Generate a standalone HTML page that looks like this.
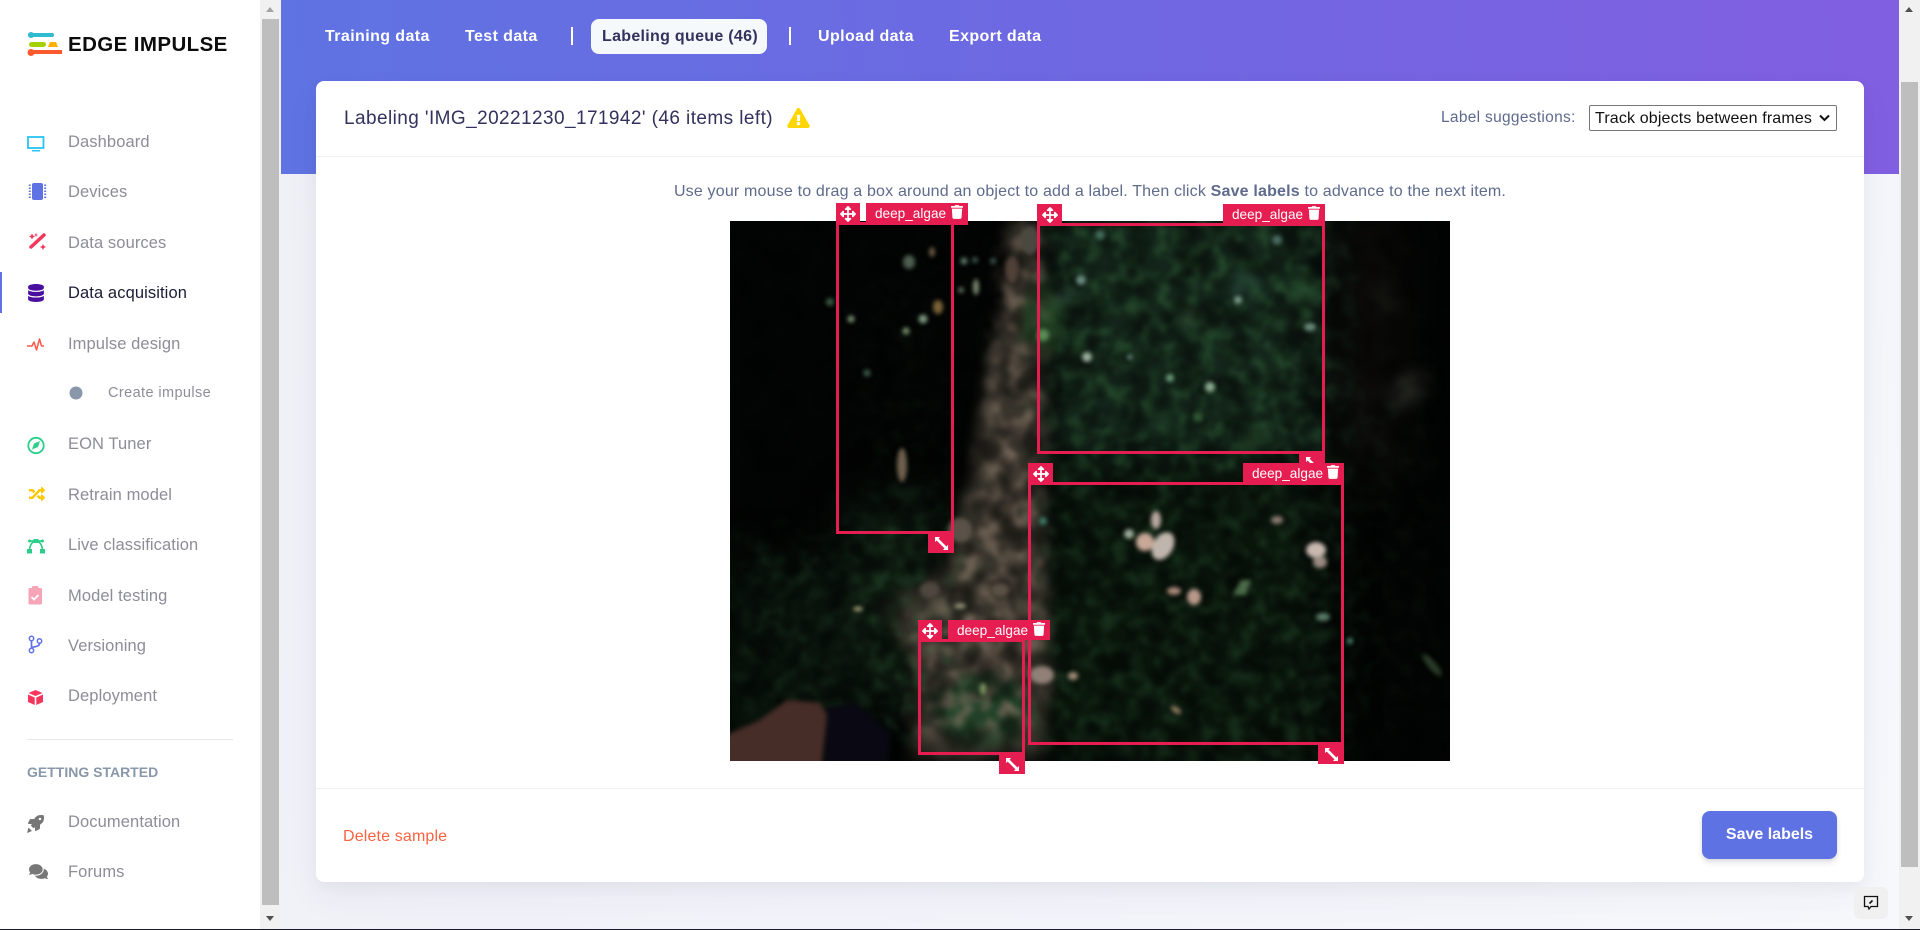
<!DOCTYPE html>
<html lang="en"><head><meta charset="utf-8"><title>Labeling queue - Edge Impulse</title>
<style>
html,body{margin:0;padding:0;width:1920px;height:930px;overflow:hidden;background:#fff}
body{position:relative;font-family:"Liberation Sans",sans-serif;color:#32325d}
.a{position:absolute}
.t{position:absolute;white-space:nowrap}
.nav{left:68px;font-size:16.5px;letter-spacing:.1px;line-height:24px;height:24px;color:#8d8d98;margin-top:1px}
.tab{font-weight:700;font-size:16px;letter-spacing:.4px;line-height:24px;top:25px;color:#fff}
.sep{position:absolute;width:2px;top:27px;height:18px;background:#fff}
.box{position:absolute;border:3px solid #e61d50;box-sizing:border-box}
.h{position:absolute;background:#e61d50}
.lab{position:absolute;background:#e61d50;color:#fff;font-size:13.6px;line-height:20px;white-space:nowrap}
.lab span{position:absolute;left:9px;top:1px}
.lab svg{position:absolute;top:2px;right:5px;width:12px;height:14px;fill:#fff}
.h svg{position:absolute;fill:#fff}
</style></head><body>

<!-- sidebar -->
<div class="a" style="left:0;top:0;width:260px;height:930px;background:#fff"></div>
<div class="a" style="left:260px;top:0;width:21px;height:930px;background:#f1f1f1"></div>
<div class="a" style="left:262px;top:19px;width:17px;height:886px;background:#bebebe"></div>
<div class="a" style="left:266px;top:7px;width:0;height:0;border-left:4.5px solid transparent;border-right:4.5px solid transparent;border-bottom:5px solid #a3a3a3"></div>
<div class="a" style="left:266px;top:916px;width:0;height:0;border-left:4.5px solid transparent;border-right:4.5px solid transparent;border-top:5px solid #505050"></div>
<div class="a" style="left:0;top:272px;width:2px;height:41px;background:#5e72e4"></div>

<!-- logo + sidebar icons -->
<svg class="a" style="left:0;top:0" width="260" height="930" viewBox="0 0 260 930">
 <rect x="28" y="33" width="26" height="4" rx="2" fill="#2fbcd0"/><circle cx="31" cy="35" r="3" fill="#2fbcd0"/>
 <rect x="29" y="42" width="17" height="5" rx="2.5" fill="#a5d106"/>
 <path d="M50 42h6l2 5H48z" fill="#ffb300"/>
 <rect x="29" y="50" width="33" height="4" fill="#ff5a2e"/><circle cx="31" cy="52.5" r="3.5" fill="#ff5a2e"/>

 <rect x="28" y="137" width="15.5" height="11" fill="#fff" stroke="#27c5f0" stroke-width="1.8"/><rect x="32" y="150" width="8" height="1.5" fill="#27c5f0"/>

 <rect x="32" y="183" width="11" height="17" rx="2" fill="#5e72e4"/><path d="M29.8 184.500v15M45.200 184.500v15" stroke="#5e72e4" stroke-width="2" stroke-dasharray="1.500 1.500"/>

 <path d="M31 247L44 235" stroke="#f5365c" stroke-width="3.500" stroke-linecap="round"/><path d="M32 233.500l1 2 2 1-2 1-1 2-1-2-2-1 2-1zM43 244l1 2 2 1-2 1-1 2-1-2-2-1 2-1zM36 233l.7 1.500 1.300.5-1.300.5-.7 1.500-.7-1.500-1.300-.5 1.300-.5z" fill="#f5365c"/>

 <svg x="28" y="284" width="16" height="18" viewBox="0 0 448 512"><path fill="#4b0f9f" d="M448 73.143v45.714C448 159.143 347.667 192 224 192S0 159.143 0 118.857V73.143C0 32.857 100.333 0 224 0s224 32.857 224 73.143zM448 176v102.857C448 319.143 347.667 352 224 352S0 319.143 0 278.857V176c48.125 33.143 136.208 48.572 224 48.572S399.874 209.143 448 176zm0 160v102.857C448 479.143 347.667 512 224 512S0 479.143 0 438.857V336c48.125 33.143 136.208 48.572 224 48.572S399.874 369.143 448 336z"/></svg>

 <path d="M27 346h5l2-4 2.500 8 3-11 2 7h2.500" fill="none" stroke="#fb5a4a" stroke-width="1.500" stroke-linejoin="round"/>
 <circle cx="76" cy="393" r="6.500" fill="#8898aa"/>

 <circle cx="36" cy="445.500" r="7.700" fill="none" stroke="#2dce89" stroke-width="1.800"/><path d="M40 441l-2 6-6 2.500 2-6z" fill="#2dce89"/>

 <svg x="28" y="486" width="18" height="16" viewBox="0 0 512 512"><path fill="#ffc800" d="M504.971 359.029c9.373 9.373 9.373 24.569 0 33.941l-80 79.984c-15.01 15.01-40.971 4.49-40.971-16.971V416h-58.785a12.004 12.004 0 0 1-8.773-3.812l-70.556-75.596 53.333-57.143L352 336h32v-39.981c0-21.438 25.943-31.998 40.971-16.971l80 79.981zM12 176h84l52.781 56.551 53.333-57.143-70.556-75.596A11.999 11.999 0 0 0 122.785 96H12c-6.627 0-12 5.373-12 12v56c0 6.627 5.373 12 12 12zm372 0v39.984c0 21.46 25.961 31.98 40.971 16.971l80-79.984c9.373-9.373 9.373-24.569 0-33.941l-80-79.981C409.943 24.021 384 34.582 384 56.019V96h-58.785a12.004 12.004 0 0 0-8.773 3.812L96 336H12c-6.627 0-12 5.373-12 12v56c0 6.627 5.373 12 12 12h110.785c3.326 0 6.503-1.381 8.773-3.812L352 176h32z"/></svg>

 <path d="M29.500 550C30 544 33 541 36 541s6 3 6.500 9M30 541h12" fill="none" stroke="#2dce89" stroke-width="1.700"/><rect x="27" y="549" width="5" height="4.500" fill="#2dce89"/><rect x="40" y="549" width="5" height="4.500" fill="#2dce89"/><rect x="33.500" y="539" width="5" height="4" fill="#2dce89"/><circle cx="29.500" cy="541" r="1.500" fill="#2dce89"/><circle cx="42.500" cy="541" r="1.500" fill="#2dce89"/>

 <rect x="28.500" y="588" width="13.500" height="16.500" rx="1.500" fill="#f6a5b8"/><rect x="32" y="586" width="6.500" height="4" rx="1" fill="#f6a5b8"/><path d="M31.500 597l2.500 2.500 4.500-4.500" fill="none" stroke="#fff" stroke-width="1.800"/>

 <circle cx="31.500" cy="638.500" r="2.200" fill="none" stroke="#5e72e4" stroke-width="1.500"/><circle cx="31.500" cy="650.500" r="2.200" fill="none" stroke="#5e72e4" stroke-width="1.500"/><circle cx="39.500" cy="641" r="2.200" fill="none" stroke="#5e72e4" stroke-width="1.500"/><path d="M31.500 641v7M39.500 643.500c0 3-4 3-8 4" fill="none" stroke="#5e72e4" stroke-width="1.700"/>

 <path d="M35.500 690l7 3-7 3-7-3z" fill="#f5365c"/><path d="M28 694.500l6.700 3V705l-6.700-3zM43 694.500l-6.700 3V705l6.700-3z" fill="#f5365c"/>

 <svg x="28" y="815" width="16" height="16" viewBox="0 0 512 512"><path fill="#777" d="M505.12 19.09c-1.19-5.53-6.66-11-12.21-12.19C460.72 0 435.51 0 410.41 0 307.18 0 245.27 55.2 199.05 128H94.84c-16.35.02-35.56 11.88-42.89 26.48L2.52 253.3A28.4 28.4 0 0 0 0 264a24 24 0 0 0 24 24h103.81l-22.47 22.47c-11.37 11.36-13 32.26 0 45.25l50.9 50.9c11.16 11.19 32.16 13.16 45.28 0L224 384.16V488a24 24 0 0 0 24 24 28.56 28.56 0 0 0 10.71-2.52l98.73-49.39c14.63-7.3 26.51-26.5 26.51-42.86V312.8c72.6-46.31 128.03-108.41 128.03-211.1.1-25.2.1-50.4-6.86-82.61zM384.04 168a40 40 0 1 1 40-40 40.02 40.02 0 0 1-40 40z"/></svg>
 <path d="M27 833l1.500-5.500 3.500 3.500z" fill="#777"/>

 <svg x="29" y="863" width="19" height="17" viewBox="0 0 576 512"><path fill="#777" d="M416 192c0-88.400-93.100-160-208-160S0 103.600 0 192c0 34.300 14.100 65.900 38 92-13.400 30.200-35.500 54.200-35.800 54.500-2.200 2.300-2.800 5.700-1.500 8.700S4.800 352 8 352c36.600 0 66.900-12.300 88.700-25 32.200 15.700 70.300 25 111.300 25 114.900 0 208-71.600 208-160zm122 220c23.900-26 38-57.700 38-92 0-66.900-53.500-124.200-129.300-148.100.9 6.600 1.300 13.300 1.300 20.100 0 105.900-107.700 192-240 192-10.800 0-21.300-.8-31.700-1.900C207.800 439.600 281.800 480 368 480c41 0 79.100-9.200 111.300-25 21.800 12.700 52.100 25 88.700 25 3.200 0 6.100-1.900 7.300-4.800 1.300-2.900.7-6.300-1.500-8.700-.3-.3-22.400-24.200-35.800-54.500z"/></svg>
</svg>

<span class="t" style="left:68px;top:33px;font-size:20.5px;font-weight:700;line-height:24px;letter-spacing:.4px;color:#0c0c0c">EDGE IMPULSE</span>
<span class="t nav" style="top:129px">Dashboard</span>
<span class="t nav" style="top:179px">Devices</span>
<span class="t nav" style="top:230px">Data sources</span>
<span class="t nav" style="top:280px;color:#1b1b36">Data acquisition</span>
<span class="t nav" style="top:331px">Impulse design</span>
<span class="t" style="left:108px;top:382px;font-size:14.5px;letter-spacing:.4px;line-height:22px;color:#8d8d98">Create impulse</span>
<span class="t nav" style="top:431px">EON Tuner</span>
<span class="t nav" style="top:482px">Retrain model</span>
<span class="t nav" style="top:532px">Live classification</span>
<span class="t nav" style="top:583px">Model testing</span>
<span class="t nav" style="top:633px">Versioning</span>
<span class="t nav" style="top:683px">Deployment</span>
<div class="a" style="left:27px;top:739px;width:206px;height:1px;background:#e6e7ea"></div>
<span class="t" style="left:27px;top:762px;font-size:14px;font-weight:700;line-height:20px;color:#8898aa">GETTING STARTED</span>
<span class="t nav" style="top:809px">Documentation</span>
<span class="t nav" style="top:859px">Forums</span>

<!-- main -->
<div class="a" style="left:281px;top:0;width:1618px;height:930px;background:linear-gradient(120deg,#eff0f6,#f2f3fa 50%,#f6f8fc)"></div>
<div class="a" style="left:281px;top:0;width:1618px;height:174px;background:linear-gradient(87deg,#5f73e2 0%,#6f68e2 50%,#815fe1 100%)"></div>

<span class="t tab" style="left:325px">Training data</span>
<span class="t tab" style="left:465px">Test data</span>
<div class="sep" style="left:571px"></div>
<div class="a" style="left:591px;top:19px;width:176px;height:35px;border-radius:8px;background:#f6f9fc"></div>
<span class="t tab" style="left:602px;color:#32325d;letter-spacing:.3px">Labeling queue (46)</span>
<div class="sep" style="left:789px"></div>
<span class="t tab" style="left:818px">Upload data</span>
<span class="t tab" style="left:949px">Export data</span>

<!-- card -->
<div class="a" style="left:316px;top:81px;width:1548px;height:801px;background:#fff;border-radius:8px;box-shadow:0 15px 35px rgba(50,50,93,.05),0 5px 15px rgba(0,0,0,.04)"></div>
<div class="a" style="left:316px;top:156px;width:1548px;height:1px;background:#eff0f3"></div>
<div class="a" style="left:316px;top:788px;width:1548px;height:1px;background:#eff0f3"></div>

<span class="t" style="left:344px;top:106px;font-size:19px;letter-spacing:.42px;line-height:26px;color:#32325d">Labeling 'IMG_20221230_171942' (46 items left)</span>
<svg class="a" style="left:787px;top:108px" width="23" height="20" viewBox="0 0 576 512"><path fill="#ffd600" d="M569.517 440.013C587.975 472.007 564.806 512 527.94 512H48.054c-36.937 0-59.999-40.055-41.577-71.987L246.423 23.985c18.467-32.009 64.72-31.951 83.154 0l239.94 416.028zM288 354c-25.405 0-46 20.595-46 46s20.595 46 46 46 46-20.595 46-46-20.595-46-46-46zm-43.673-165.346l7.418 136c.347 6.364 5.609 11.346 11.982 11.346h48.546c6.373 0 11.635-4.982 11.982-11.346l7.418-136c.375-6.874-5.098-12.654-11.982-12.654h-63.383c-6.884 0-12.356 5.78-11.981 12.654z"/></svg>

<span class="t" style="left:1441px;top:106px;font-size:15.5px;letter-spacing:.3px;line-height:24px;color:#5f6b8c">Label suggestions:</span>
<div class="a" style="left:1589px;top:105px;width:248px;height:26px;box-sizing:border-box;border:1px solid #767676;border-radius:2px;background:#fff"></div>
<span class="t" style="left:1595px;top:107px;font-size:16px;letter-spacing:.15px;line-height:24px;color:#111">Track objects between frames</span>
<svg class="a" style="left:1819px;top:114px" width="11" height="8" viewBox="0 0 11 8"><path d="M1 1.500l4.500 4.500L10 1.500" fill="none" stroke="#111" stroke-width="2"/></svg>

<div class="a" style="left:316px;top:181px;width:1548px;text-align:center;font-size:16px;letter-spacing:.18px;line-height:22px;color:#5f6b8c;white-space:nowrap">Use your mouse to drag a box around an object to add a label. Then click <b>Save labels</b> to advance to the next item.</div>

<!-- photo -->
<svg class="a" style="left:730px;top:221px" width="720" height="540" viewBox="730 221 720 540">
 <defs>
  <clipPath id="cp"><rect x="730" y="221" width="720" height="540"/></clipPath>
  <filter id="bl" filterUnits="userSpaceOnUse" x="600" y="100" width="980" height="800" color-interpolation-filters="sRGB"><feGaussianBlur stdDeviation="22"/></filter>
  <filter id="bs" x="-80%" y="-80%" width="260%" height="260%" color-interpolation-filters="sRGB"><feGaussianBlur stdDeviation="2.2"/></filter>
  <filter id="bm" filterUnits="userSpaceOnUse" x="600" y="100" width="980" height="800" color-interpolation-filters="sRGB"><feGaussianBlur stdDeviation="7"/></filter>
  <filter id="bp" filterUnits="userSpaceOnUse" x="600" y="100" width="980" height="800" color-interpolation-filters="sRGB"><feGaussianBlur stdDeviation="2.5"/></filter>
  <filter id="fol" filterUnits="userSpaceOnUse" x="700" y="200" width="780" height="600" color-interpolation-filters="sRGB">
   <feGaussianBlur in="SourceGraphic" stdDeviation="22" result="b"/>
   <feTurbulence type="fractalNoise" baseFrequency=".07" numOctaves="2" seed="7" result="n"/>
   <feColorMatrix in="n" type="matrix" values="0 0 0 0 .15  0 0 0 0 .3  0 0 0 0 .18  3.5 0 0 0 -1.5" result="c"/>
   <feGaussianBlur in="c" stdDeviation="2" result="c2"/>
   <feComposite in="c2" in2="b" operator="in"/>
  </filter>
  <filter id="brn" filterUnits="userSpaceOnUse" x="700" y="200" width="780" height="600" color-interpolation-filters="sRGB">
   <feGaussianBlur in="SourceGraphic" stdDeviation="10" result="b"/>
   <feTurbulence type="fractalNoise" baseFrequency=".055" numOctaves="2" seed="21" result="n"/>
   <feColorMatrix in="n" type="matrix" values="0 0 0 0 .5  0 0 0 0 .44  0 0 0 0 .38  3.5 0 0 0 -1.4" result="c"/>
   <feGaussianBlur in="c" stdDeviation="2.5" result="c2"/>
   <feComposite in="c2" in2="b" operator="in"/>
  </filter>
  <filter id="drk" filterUnits="userSpaceOnUse" x="700" y="200" width="780" height="600" color-interpolation-filters="sRGB">
   <feTurbulence type="fractalNoise" baseFrequency=".04" numOctaves="2" seed="4" result="n"/>
   <feColorMatrix in="n" type="matrix" values="0 0 0 0 0  0 0 0 0 0  0 0 0 0 0  4 0 0 0 -1.6" result="c"/>
   <feGaussianBlur in="c" stdDeviation="3" result="c2"/>
   <feComposite in="c2" in2="SourceAlpha" operator="in"/>
  </filter>
 </defs>
 <g clip-path="url(#cp)">
  <rect x="730" y="221" width="720" height="540" fill="#030504"/>
  <!-- soft base -->
  <g filter="url(#bl)">
   <rect x="1050" y="200" width="270" height="260" fill="#14261b"/>
   <rect x="1040" y="470" width="290" height="310" fill="#0a160c"/>
   <rect x="850" y="500" width="100" height="200" fill="#0e1a10"/>
   <rect x="720" y="560" width="130" height="220" fill="#09120b"/>
   <rect x="1340" y="220" width="60" height="260" fill="#0e0d0b"/>
  </g>
  <g filter="url(#bm)">
   <path d="M1008 221h32l4 100 0 160 6 220-10 60h-130l10-90-18-30-22-30 68-50 22-80 18-110 20-80z" fill="#38342c"/>
   <ellipse cx="1040" cy="320" rx="18" ry="36" fill="#2a4f2a"/>
   <ellipse cx="985" cy="710" rx="50" ry="36" fill="#224228"/>
   <circle cx="1245" cy="285" r="13" fill="#2c4c40"/><circle cx="1305" cy="290" r="14" fill="#2c5534"/>
   <circle cx="1253" cy="440" r="12" fill="#234428"/><circle cx="1165" cy="420" r="12" fill="#20402a"/>
   <circle cx="1188" cy="315" r="9" fill="#3c5c40"/><circle cx="1065" cy="298" r="8" fill="#3f5e4e"/>
   <ellipse cx="1405" cy="390" rx="26" ry="14" transform="rotate(-25 1405 390)" fill="#24241f"/>
   <ellipse cx="1385" cy="300" rx="14" ry="14" fill="#14140f"/>
  </g>
  <!-- foliage speckle -->
  <g filter="url(#fol)">
   <rect x="1050" y="210" width="280" height="260" fill="#fff" fill-opacity=".85"/>
   <rect x="1040" y="480" width="300" height="290" fill="#fff" fill-opacity=".45"/>
   <rect x="850" y="510" width="110" height="220" fill="#fff" fill-opacity=".55"/>
   <rect x="735" y="540" width="100" height="170" fill="#fff" fill-opacity=".35"/>
   <rect x="860" y="280" width="80" height="230" fill="#fff" fill-opacity=".12"/>
   <rect x="1340" y="380" width="100" height="350" fill="#fff" fill-opacity=".1"/>
  </g>
  <g filter="url(#brn)">
   <path d="M1012 221h26l2 180 4 300-20 30h-110l8-60-20-40 40-30 25-60 18-100 10-100z" fill="#fff" fill-opacity=".8"/>
  </g>
  <rect x="730" y="221" width="720" height="540" filter="url(#drk)" fill="#000" fill-opacity=".45"/>
  <!-- brown + dark patches -->
  <g filter="url(#bp)">
   <path d="M825 708l30-5 35 30-5 40h-60z" fill="#0a0913"/>
   <path d="M722 737l38-17 27-20 33 3 7 12-6 56H722z" fill="#472d28"/>
  </g>
  <!-- specks -->
  <g filter="url(#bs)">
   <ellipse cx="909" cy="262" rx="6" ry="7" fill="#4e5e50"/><ellipse cx="932" cy="252" rx="3" ry="5" fill="#6a5a44"/>
   <circle cx="964" cy="261" r="3.5" fill="#5f7a6a"/><circle cx="975" cy="260" r="3" fill="#3f5a52"/><circle cx="993" cy="261" r="3" fill="#3f5a52"/>
   <ellipse cx="976" cy="287" rx="3" ry="8" fill="#7a8a70"/><circle cx="961" cy="290" r="3" fill="#5f6f60"/>
   <circle cx="851" cy="319" r="3.5" fill="#7a9070"/><circle cx="923" cy="319" r="4.5" fill="#7a9a80"/><circle cx="906" cy="331" r="3.5" fill="#7a9070"/>
   <ellipse cx="938" cy="307" rx="5" ry="7" fill="#7a6238"/><circle cx="830" cy="302" r="4" fill="#3a5a40"/><circle cx="867" cy="373" r="3.5" fill="#3f5f50"/>
   <ellipse cx="902" cy="465" rx="5" ry="17" fill="#6f604e"/>
   <circle cx="1087" cy="357" r="5" fill="#9ab0a0"/><circle cx="1081" cy="280" r="5" fill="#6a8a80"/>
   <circle cx="1043" cy="335" r="6" fill="#5a8a55"/>
   <circle cx="1238" cy="300" r="4" fill="#7a9a88"/>
   <ellipse cx="1310" cy="327" rx="6" ry="4" fill="#6a8a78"/><circle cx="1130" cy="357" r="3" fill="#5a7a70"/><circle cx="1170" cy="378" r="4" fill="#6a9a78"/>
   <circle cx="1210" cy="387" r="5" fill="#8aaa90"/><circle cx="1198" cy="417" r="5" fill="#2f5530"/>
   <circle cx="1277" cy="240" r="5" fill="#4a6a60"/><circle cx="1100" cy="235" r="5" fill="#3f6a58"/>
   <circle cx="1129" cy="534" r="5" fill="#9aaa98"/><ellipse cx="1145" cy="542" rx="9" ry="9" fill="#c8a898"/><ellipse cx="1156" cy="520" rx="5" ry="9" fill="#b8a8a0"/>
   <ellipse cx="1163" cy="546" rx="10" ry="15" transform="rotate(30 1163 546)" fill="#c0b5ad"/><ellipse cx="1277" cy="520" rx="6" ry="4" fill="#8a7a70"/>
   <ellipse cx="1316" cy="550" rx="10" ry="8" fill="#c8b8b0"/><ellipse cx="1320" cy="562" rx="7" ry="6" fill="#9a8a82"/>
   <ellipse cx="1174" cy="591" rx="7" ry="4" fill="#a88878"/><ellipse cx="1194" cy="597" rx="7" ry="8" fill="#b89888"/>
   <path d="M1233 595l8-15h10l-5 15z" fill="#4a6a48"/><ellipse cx="1323" cy="617" rx="7" ry="4" fill="#5a7a68"/><circle cx="1350" cy="641" r="3" fill="#4a8a70"/>
   <ellipse cx="1176" cy="710" rx="6" ry="3" transform="rotate(35 1176 710)" fill="#8a7a60"/><circle cx="1043" cy="521" r="4" fill="#3a7a68"/>
   <ellipse cx="1042" cy="675" rx="12" ry="9" fill="#908078"/><ellipse cx="1073" cy="676" rx="5" ry="4" fill="#a08a78"/>
   <ellipse cx="983" cy="689" rx="3" ry="6" fill="#7a9a60"/><ellipse cx="858" cy="609" rx="5" ry="2.5" fill="#9a9a70"/><ellipse cx="960" cy="606" rx="6" ry="3" fill="#8a8a70"/>
   <ellipse cx="1000" cy="630" rx="7" ry="5" fill="#6a6056"/><ellipse cx="930" cy="590" rx="10" ry="8" fill="#4f473f"/><ellipse cx="960" cy="530" rx="12" ry="12" fill="#5a5248"/>
   <ellipse cx="1000" cy="590" rx="9" ry="7" fill="#5a5045"/><ellipse cx="1030" cy="240" rx="9" ry="14" fill="#4b4840"/><ellipse cx="1012" cy="270" rx="7" ry="14" fill="#4f4038"/>
   <ellipse cx="1432" cy="665" rx="4" ry="14" transform="rotate(-40 1432 665)" fill="#2a3a28"/>
  </g>
 </g>
</svg>

<!-- boxes -->
<div class="box" style="left:836px;top:222px;width:118px;height:312px"></div>
<div class="box" style="left:1037px;top:223px;width:288px;height:231px"></div>
<div class="box" style="left:1028px;top:482px;width:316px;height:263px"></div>
<div class="box" style="left:918px;top:639px;width:107px;height:116px"></div>

<!-- handles: box 1 -->
<div class="h" style="left:836px;top:203px;width:24px;height:22px"><svg style="left:4px;top:3px" width="16" height="16" viewBox="0 0 512 512"><use href="#mv"/></svg></div>
<div class="lab" style="left:866px;top:203px;width:102px;height:22px"><span>deep_algae</span><svg viewBox="0 0 448 512"><use href="#tr"/></svg></div>
<div class="h" style="left:928px;top:534px;width:26px;height:19px"><svg style="left:7px;top:3px" width="13" height="13" viewBox="0 0 14 14"><use href="#rs"/></svg></div>
<!-- box 2 -->
<div class="h" style="left:1037px;top:204px;width:25px;height:22px"><svg style="left:5px;top:3px" width="16" height="16" viewBox="0 0 512 512"><use href="#mv"/></svg></div>
<div class="lab" style="left:1223px;top:204px;width:102px;height:22px"><span>deep_algae</span><svg viewBox="0 0 448 512"><use href="#tr"/></svg></div>
<div class="h" style="left:1299px;top:454px;width:26px;height:19px"><svg style="left:7px;top:3px" width="13" height="13" viewBox="0 0 14 14"><use href="#rs"/></svg></div>
<!-- box 3 -->
<div class="h" style="left:1028px;top:463px;width:25px;height:22px"><svg style="left:5px;top:3px" width="16" height="16" viewBox="0 0 512 512"><use href="#mv"/></svg></div>
<div class="lab" style="left:1243px;top:463px;width:101px;height:22px"><span>deep_algae</span><svg viewBox="0 0 448 512"><use href="#tr"/></svg></div>
<div class="h" style="left:1318px;top:745px;width:26px;height:19px"><svg style="left:7px;top:3px" width="13" height="13" viewBox="0 0 14 14"><use href="#rs"/></svg></div>
<!-- box 4 -->
<div class="h" style="left:918px;top:620px;width:24px;height:22px"><svg style="left:4px;top:3px" width="16" height="16" viewBox="0 0 512 512"><use href="#mv"/></svg></div>
<div class="lab" style="left:948px;top:620px;width:102px;height:20px"><span>deep_algae</span><svg viewBox="0 0 448 512"><use href="#tr"/></svg></div>
<div class="h" style="left:999px;top:755px;width:26px;height:19px"><svg style="left:7px;top:3px" width="13" height="13" viewBox="0 0 14 14"><use href="#rs"/></svg></div>

<svg width="0" height="0" style="position:absolute"><defs>
 <path id="mv" d="M352.201 425.775l-79.196 79.196c-9.373 9.373-24.568 9.373-33.941 0l-79.196-79.196c-15.119-15.119-4.411-40.971 16.971-40.97h51.162L228 284H127.196v51.162c0 21.382-25.851 32.09-40.971 16.971L7.029 272.937c-9.373-9.373-9.373-24.569 0-33.941L86.225 159.8c15.119-15.119 40.971-4.411 40.971 16.971V228H228V127.196h-51.23c-21.382 0-32.09-25.851-16.971-40.971l79.196-79.196c9.373-9.373 24.568-9.373 33.941 0l79.196 79.196c15.119 15.119 4.411 40.971-16.971 40.971h-51.162V228h100.804v-51.162c0-21.382 25.851-32.09 40.97-16.971l79.196 79.196c9.373 9.373 9.373 24.569 0 33.941L425.773 352.2c-15.119 15.119-40.971 4.411-40.97-16.971V284H284v100.804h51.23c21.382 0 32.09 25.851 16.971 40.971z"/>
 <path id="tr" d="M432 32H312l-9.4-18.7A24 24 0 0 0 281.1 0H166.8a23.72 23.72 0 0 0-21.4 13.3L136 32H16A16 16 0 0 0 0 48v32a16 16 0 0 0 16 16h416a16 16 0 0 0 16-16V48a16 16 0 0 0-16-16zM53.2 467a48 48 0 0 0 47.9 45h245.8a48 48 0 0 0 47.9-45L416 128H32z"/>
 <path id="rs" d="M0 0h5.500L3.800 1.700l8.500 8.500L14 8.500V14H8.500l1.700-1.700L1.700 3.800 0 5.500z"/>
</defs></svg>

<!-- footer -->
<span class="t" style="left:343px;top:825px;font-size:16px;letter-spacing:.15px;line-height:24px;color:#fb6340">Delete sample</span>
<div class="a" style="left:1702px;top:811px;width:135px;height:48px;border-radius:8px;background:#5e72e4;box-shadow:0 4px 6px rgba(50,50,93,.11),0 1px 3px rgba(0,0,0,.08);color:#fff;font-weight:700;font-size:16px;line-height:48px;text-align:center">Save labels</div>

<!-- right scrollbar -->
<div class="a" style="left:1899px;top:0;width:21px;height:930px;background:#f1f1f1"></div>
<div class="a" style="left:1901px;top:82px;width:17px;height:785px;background:#bebebe"></div>
<div class="a" style="left:1905px;top:7px;width:0;height:0;border-left:4.5px solid transparent;border-right:4.5px solid transparent;border-bottom:5px solid #505050"></div>
<div class="a" style="left:1905px;top:916px;width:0;height:0;border-left:4.5px solid transparent;border-right:4.5px solid transparent;border-top:5px solid #505050"></div>

<!-- feedback -->
<div class="a" style="left:1854px;top:887px;width:34px;height:32px;border-radius:6px;background:#f0f0f0"></div>
<svg class="a" style="left:1863px;top:895px" width="16" height="16" viewBox="0 0 16 16"><path d="M1.500 1.500h13v10H8l-2 2.500-1-2.500H1.500z" fill="none" stroke="#111" stroke-width="1.300"/><path d="M6.500 8.500l3-3" stroke="#111" stroke-width="1.600"/></svg>

<div class="a" style="left:0;top:929px;width:1920px;height:1px;background:#1b1a2c"></div>
</body></html>
